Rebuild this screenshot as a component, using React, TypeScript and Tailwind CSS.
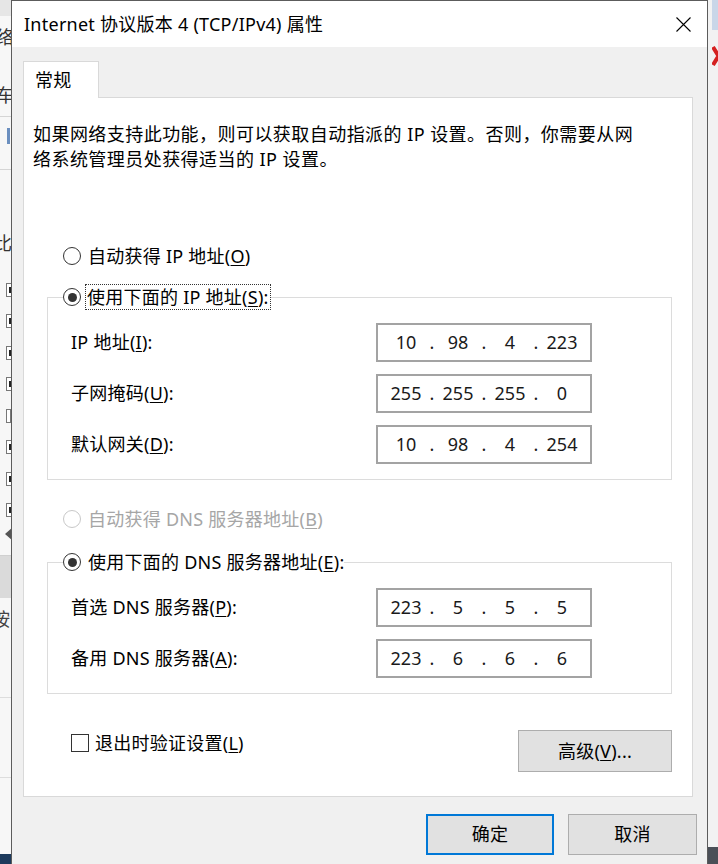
import React from "react";

function Radio({ checked, disabled }: { checked?: boolean; disabled?: boolean }) {
  return (
    <span
      className={
        "w-[18px] h-[18px] rounded-full border-[1.5px] bg-white flex items-center justify-center shrink-0 " +
        (disabled ? "border-[#c8c8c8]" : "border-[#333333]")
      }
    >
      {checked && <span className="w-[9px] h-[9px] rounded-full bg-[#333333]" />}
    </span>
  );
}

function IpBox({ parts }: { parts: string[] }) {
  return (
    <div className="w-[216px] h-[39px] border-2 border-[#a3a3a3] bg-white flex items-center pl-[8px] text-[#1a1a1a] tracking-normal">
      {parts.map((p, i) => (
        <React.Fragment key={i}>
          {i > 0 && <span className="w-[12px] text-center">.</span>}
          <span className="w-[40px] text-center">{p}</span>
        </React.Fragment>
      ))}
    </div>
  );
}

function Row({ label, k, rest, parts }: { label: string; k: string; rest: string; parts: string[] }) {
  return (
    <div className="flex items-center ml-[8px]">
      <span className="w-[305px] whitespace-nowrap">
        {label}(<span className="underline underline-offset-2">{k}</span>){rest}
      </span>
      <IpBox parts={parts} />
    </div>
  );
}

function LeftStrip() {
  return (
    <div className="w-[11px] h-full shrink-0 overflow-hidden bg-[#f7f7f7] flex flex-col text-[18px] leading-[18px] text-[#333]">
      <div className="h-[16px] bg-[#e6e6e6] shrink-0" />
      <div className="h-[12px] shrink-0" />
      <div className="h-[18px] shrink-0 whitespace-nowrap -ml-[4px]">络</div>
      <div className="h-[40px] shrink-0" />
      <div className="h-[18px] shrink-0 whitespace-nowrap -ml-[4px]">车</div>
      <div className="h-[13px] shrink-0 border-b border-[#d5d5d5]" />
      <div className="h-[11px] shrink-0" />
      <div className="h-[18px] shrink-0 flex justify-end pr-[1px]">
        <span className="w-[3px] h-[16px] bg-[#6b8fbf]" />
      </div>
      <div className="h-[24px] shrink-0 border-b border-[#d5d5d5]" />
      <div className="h-[64px] shrink-0" />
      <div className="h-[18px] shrink-0 whitespace-nowrap -ml-[6px]">比</div>
      <div className="h-[22px] shrink-0" />
      {[true, true, true, true, false, true, true, true].map((c, i) => (
        <div key={i} className="h-[31.5px] shrink-0 flex items-center pl-[6px]">
          <span className="w-[10px] h-[14px] border border-[#777] bg-white flex items-center pl-[2px]">
            {c && <span className="w-[4px] h-[6px] bg-[#222]" />}
          </span>
        </div>
      ))}
      <div className="h-[16px] shrink-0 flex items-center pl-[5px]">
        <span className="w-0 h-0 border-y-[6px] border-y-transparent border-r-[7px] border-r-[#555]" />
      </div>
      <div className="h-[14px] shrink-0 border-b border-[#d0d0d0]" />
      <div className="h-[42px] shrink-0 bg-[#dadada]" />
      <div className="h-[12px] shrink-0" />
      <div className="h-[18px] shrink-0 whitespace-nowrap -ml-[8px] text-[#444]">按</div>
      <div className="h-[70px] shrink-0 border-b border-[#dddddd]" />
      <div className="h-[80px] shrink-0 border-b border-[#dddddd]" />
      <div className="flex-1" />
      <div className="h-[10px] shrink-0 bg-[#1d3a5c]" />
    </div>
  );
}

function RightStrip() {
  return (
    <div className="w-[10px] h-full shrink-0 overflow-hidden bg-[#f2f2f2] flex flex-col">
      <div className="h-[30px] shrink-0 flex justify-end">
        <span className="w-[6px] h-[30px] bg-[#c9d6e8]" />
      </div>
      <div className="h-[15px] shrink-0" />
      <div className="h-[22px] shrink-0 pl-[4px] overflow-hidden">
        <svg width="14" height="22" viewBox="0 0 14 22">
          <path d="M1 2 L12 20 M12 2 L1 20" stroke="#d42020" strokeWidth="4" />
        </svg>
      </div>
      <div className="flex-1" />
      <div className="h-[17px] shrink-0 bg-[#4a4f57]" />
    </div>
  );
}

export default function App() {
  return (
    <div className="w-[718px] h-[864px] overflow-hidden flex bg-[#f0f0f0] text-[18px] text-black tracking-[0.25px] [font-family:'Noto_Sans','Noto_Sans_CJK_SC',sans-serif]">
      <LeftStrip />
      <div className="w-[697px] h-full shrink-0 border-x border-t border-[#5c5c5c] flex flex-col bg-[#f0f0f0]">
        {/* Title bar */}
        <div className="h-[46px] shrink-0 bg-white flex items-center justify-between pl-[12px] pr-[16px]">
          <span className="whitespace-nowrap leading-[24px]">Internet 协议版本 4 (TCP/IPv4) 属性</span>
          <svg width="15" height="15" viewBox="0 0 15 15">
            <path d="M0.5 0.5 L14.5 14.5 M14.5 0.5 L0.5 14.5" stroke="#000" strokeWidth="1.1" />
          </svg>
        </div>

        {/* Body */}
        <div className="flex-1 pt-[14px] pl-[11px] flex flex-col">
          {/* Tab */}
          <div className="relative z-10 w-[76px] h-[37px] -mb-[1px] bg-white border-x border-t border-[#d9d9d9] flex items-center pl-[11px] pb-[1px]">
            <span className="leading-[24px]">常规</span>
          </div>

          {/* Panel */}
          <div className="w-[670px] h-[700px] shrink-0 bg-white border border-[#d9d9d9] pl-[9px] pt-[24px] flex flex-col">
            <div className="leading-[25px] whitespace-nowrap tracking-[0.45px]">
              <div>如果网络支持此功能，则可以获取自动指派的 IP 设置。否则，你需要从网</div>
              <div>络系统管理员处获得适当的 IP 设置。</div>
            </div>

            <div className="mt-[71px] ml-[30px] h-[26px] flex items-center gap-[7px]">
              <Radio />
              <span className="whitespace-nowrap">
                自动获得 IP 地址(<span className="underline underline-offset-2">O</span>)
              </span>
            </div>

            <fieldset className="mt-[15px] ml-[14px] w-[625px] border border-[#dcdcdc] pl-[15px] pr-0 pt-[13px] pb-[15px] flex flex-col gap-[12px]">
              <legend className="p-0">
                <span className="h-[26px] flex items-center gap-[4px]">
                  <Radio checked />
                  <span className="whitespace-nowrap border border-dotted border-[#333] px-[1px] h-[26px] flex items-center">
                    使用下面的 IP 地址(<span className="underline underline-offset-2">S</span>):
                  </span>
                </span>
              </legend>
              <Row label="IP 地址" k="I" rest=":" parts={["10", "98", "4", "223"]} />
              <Row label="子网掩码" k="U" rest=":" parts={["255", "255", "255", "0"]} />
              <Row label="默认网关" k="D" rest=":" parts={["10", "98", "4", "254"]} />
            </fieldset>

            <div className="mt-[26px] ml-[30px] h-[26px] flex items-center gap-[7px] text-[#a6a6a6]">
              <Radio disabled />
              <span className="whitespace-nowrap">
                自动获得 DNS 服务器地址(<span className="underline underline-offset-2">B</span>)
              </span>
            </div>

            <fieldset className="mt-[17px] ml-[14px] w-[625px] border border-[#dcdcdc] pl-[15px] pr-0 pt-[13px] pb-[15px] flex flex-col gap-[12px]">
              <legend className="p-0">
                <span className="h-[26px] flex items-center gap-[7px]">
                  <Radio checked />
                  <span className="whitespace-nowrap">
                    使用下面的 DNS 服务器地址(<span className="underline underline-offset-2">E</span>):
                  </span>
                </span>
              </legend>
              <Row label="首选 DNS 服务器" k="P" rest=":" parts={["223", "5", "5", "5"]} />
              <Row label="备用 DNS 服务器" k="A" rest=":" parts={["223", "6", "6", "6"]} />
            </fieldset>

            <div className="mt-[36px] w-[639px] flex items-start justify-between">
              <div className="ml-[38px] h-[26px] flex items-center gap-[6px]">
                <span className="w-[18px] h-[18px] border-[1.5px] border-[#333] bg-white shrink-0" />
                <span className="whitespace-nowrap">
                  退出时验证设置(<span className="underline underline-offset-2">L</span>)
                </span>
              </div>
              <button className="w-[154px] h-[42px] bg-[#e1e1e1] border border-[#adadad] flex items-center justify-center">
                <span className="whitespace-nowrap">
                  高级(<span className="underline underline-offset-2">V</span>)...
                </span>
              </button>
            </div>
          </div>

          {/* Buttons */}
          <div className="mt-[17px] flex justify-end gap-[14px] pr-[10px]">
            <button className="w-[128px] h-[41px] bg-[#e1e1e1] border-2 border-[#0078d7] flex items-center justify-center">
              确定
            </button>
            <button className="w-[129px] h-[41px] bg-[#e1e1e1] border border-[#adadad] flex items-center justify-center">
              取消
            </button>
          </div>
        </div>
      </div>
      <RightStrip />
    </div>
  );
}
